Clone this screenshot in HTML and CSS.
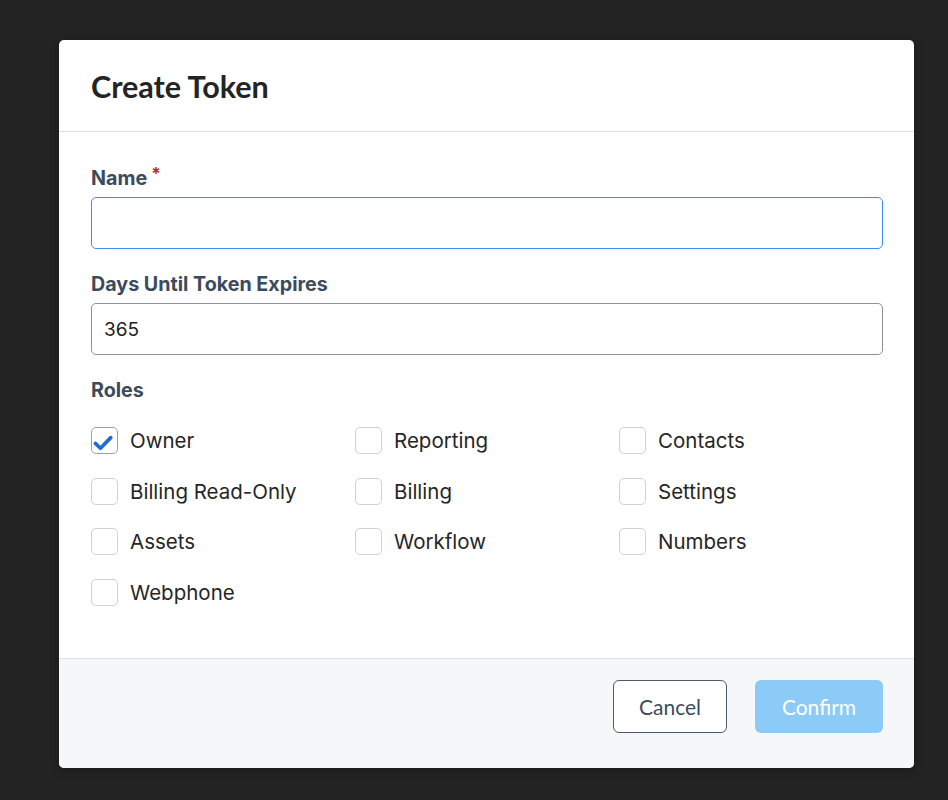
FILE: index.html
```html
<!DOCTYPE html>
<html>
<head>
<meta charset="utf-8">
<link rel="stylesheet" href="styles.css">
</head>
<body>
<div class="dialog">
  <div class="dialog-header">
    <h1 class="title">Create Token</h1>
  </div>
  <div class="dialog-body">
    <div class="field">
      <label class="label">Name<span class="req">*</span></label>
      <div class="input input-focus"></div>
    </div>
    <div class="field">
      <label class="label">Days Until Token Expires</label>
      <div class="input">365</div>
    </div>
    <div class="field">
      <label class="label">Roles</label>
      <div class="roles">
        <div class="role"><span class="box checked"><svg viewBox="0 0 26 26" width="26" height="26"><path d="M3.5 15.5 L8.8 20.5 L19.5 9.5" fill="none" stroke="#1f6ad6" stroke-width="3.8" stroke-linecap="round" stroke-linejoin="round"/></svg></span><span class="role-text">Owner</span></div>
        <div class="role"><span class="box"></span><span class="role-text">Reporting</span></div>
        <div class="role"><span class="box"></span><span class="role-text">Contacts</span></div>
        <div class="role"><span class="box"></span><span class="role-text">Billing Read-Only</span></div>
        <div class="role"><span class="box"></span><span class="role-text">Billing</span></div>
        <div class="role"><span class="box"></span><span class="role-text">Settings</span></div>
        <div class="role"><span class="box"></span><span class="role-text">Assets</span></div>
        <div class="role"><span class="box"></span><span class="role-text">Workflow</span></div>
        <div class="role"><span class="box"></span><span class="role-text">Numbers</span></div>
        <div class="role"><span class="box"></span><span class="role-text">Webphone</span></div>
      </div>
    </div>
  </div>
  <div class="dialog-footer">
    <button class="btn btn-cancel">Cancel</button>
    <button class="btn btn-confirm">Confirm</button>
  </div>
</div>
</body>
</html>
```
FILE: styles.css
```css
html, body {
  margin: 0;
  padding: 0;
  background: #232323;
  height: 800px;
  overflow: hidden;
}
body {
  padding: 40px 34px 0 59px;
  box-sizing: border-box;
}
.dialog {
  width: 855px;
  height: 728px;
  background: #ffffff;
  border-radius: 5px;
  display: flex;
  flex-direction: column;
  overflow: hidden;
  box-shadow: 0 2px 8px rgba(0,0,0,0.3);
}
.dialog-header {
  height: 92px;
  box-sizing: border-box;
  border-bottom: 1px solid #dcdfe3;
  padding: 0 32px;
  display: flex;
  align-items: center;
}
.title {
  margin: 0;
  font-family: Lato, "Liberation Sans", sans-serif;
  font-weight: 700;
  font-size: 30.5px;
  color: #222426;
  padding-top: 0;
}
.dialog-body {
  flex: 1;
  padding: 31px 31px 0 32px;
  display: flex;
  flex-direction: column;
  gap: 24px;
}
.field {
  display: flex;
  flex-direction: column;
}
.label {
  font-family: Inter, "Noto Sans", sans-serif;
  font-weight: 700;
  font-size: 19.7px;
  color: #3c4b5c;
  line-height: 22px;
  margin-bottom: 8px;
}
.req {
  color: #c62828;
  font-size: 17px;
  margin-left: 4px;
  vertical-align: 5px;
}
.input {
  height: 52px;
  box-sizing: border-box;
  border: 1px solid #8e9296;
  border-radius: 5px;
  font-family: Inter, "Noto Sans", sans-serif;
  font-size: 19px;
  color: #222;
  padding: 0 12px;
  display: flex;
  align-items: center;
}
.input-focus {
  border-color: #3d8ef2;
}
.roles {
  display: grid;
  grid-template-columns: repeat(3, 1fr);
  row-gap: 23.5px;
  margin-top: 18px;
}
.role {
  display: flex;
  align-items: center;
  height: 27px;
}
.box {
  width: 27px;
  height: 27px;
  box-sizing: border-box;
  border: 1px solid #cfd2d6;
  border-radius: 5px;
  background: #fff;
  margin-right: 12px;
  display: flex;
  align-items: center;
  justify-content: center;
  flex-shrink: 0;
}
.box.checked {
  border-color: #9aa0a6;
}
.box svg {
  display: block;
}
.role-text {
  font-family: Inter, "Noto Sans", sans-serif;
  font-size: 20.5px;
  color: #262626;
}
.dialog-footer {
  height: 110px;
  box-sizing: border-box;
  border-top: 1px solid #dcdfe3;
  background: #f6f7f9;
  display: flex;
  justify-content: flex-end;
  align-items: center;
  gap: 28px;
  padding: 0 31px 15px 0;
}
.btn {
  height: 53px;
  border-radius: 6px;
  font-family: Lato, "Liberation Sans", sans-serif;
  font-size: 21px;
  cursor: pointer;
}
.btn-cancel {
  width: 114px;
  background: #fff;
  border: 1.5px solid #4d5b6a;
  color: #3c4b5c;
}
.btn-confirm {
  width: 128px;
  background: #8ccbf7;
  border: none;
  color: #ffffff;
}
```
